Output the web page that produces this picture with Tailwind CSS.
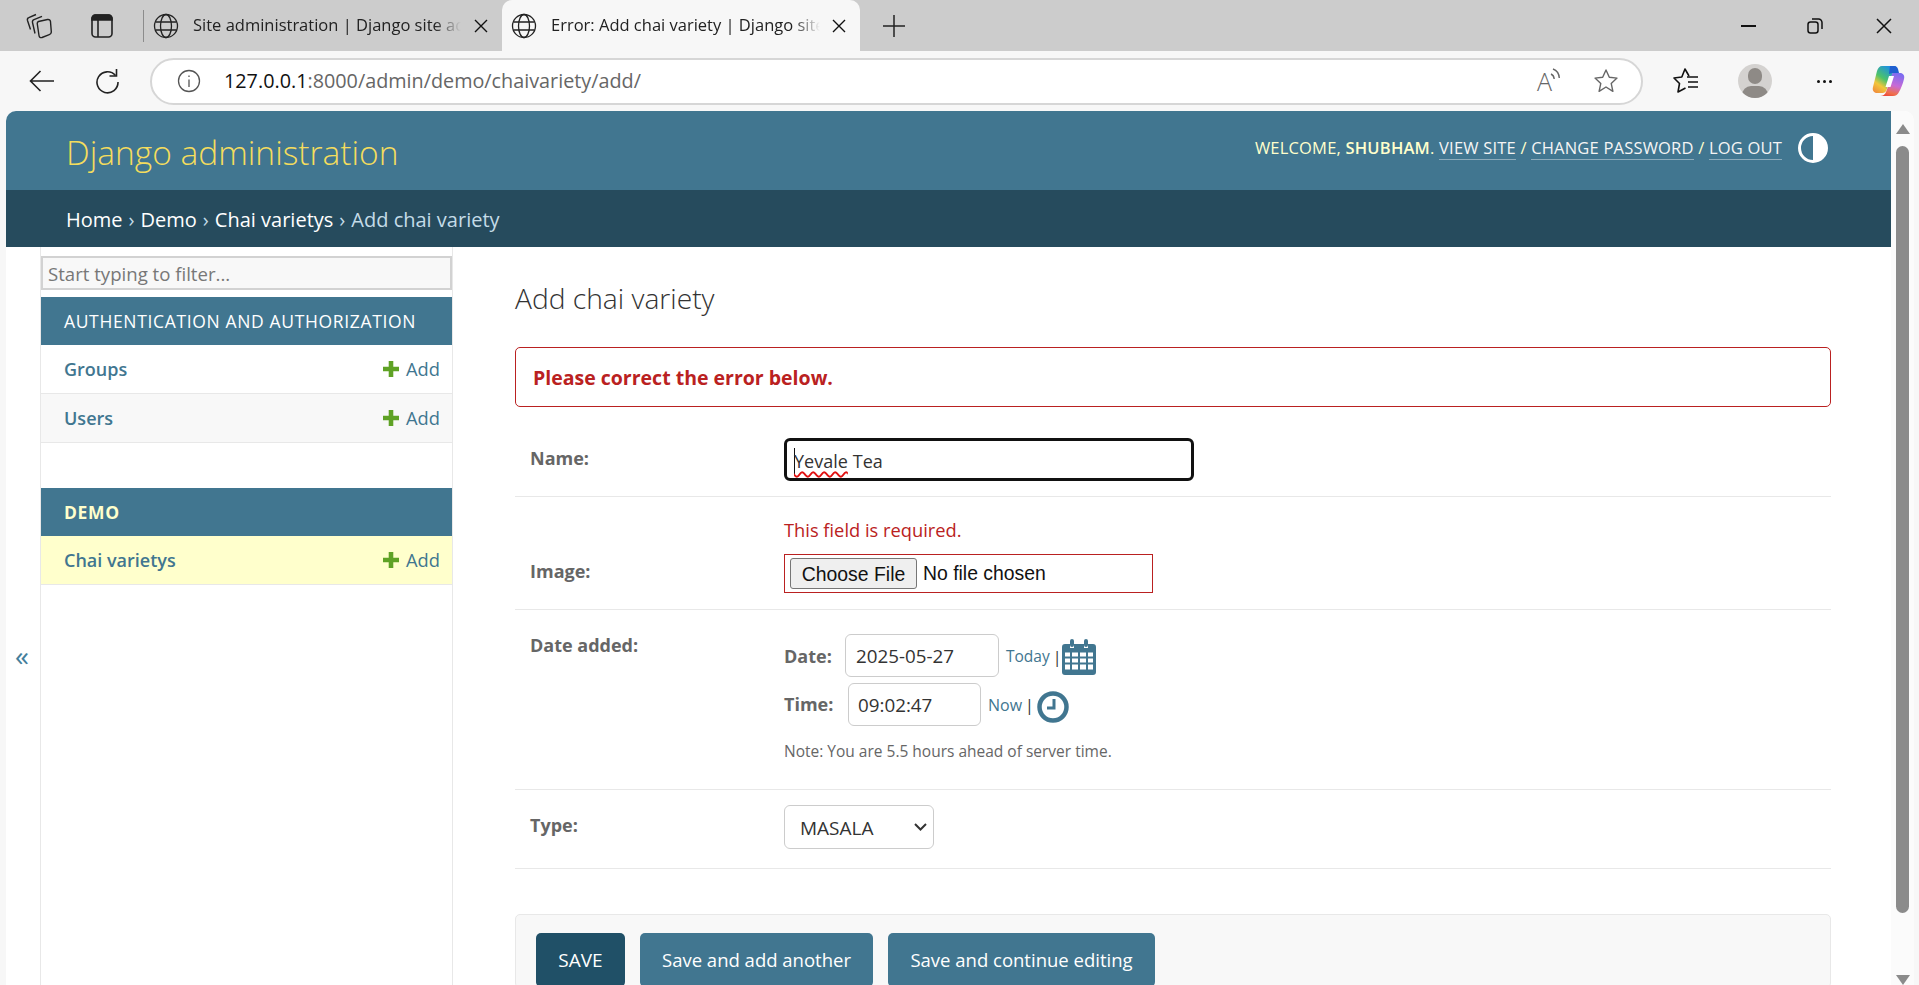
<!DOCTYPE html>
<html lang="en">
<head>
  <meta charset="UTF-8">
  <title>Error: Add chai variety | Django site admin</title>
  <script src="https://cdn.jsdelivr.net/npm/@tailwindcss/browser@4"></script>
</head>
<body class="h-[985px] overflow-hidden bg-[#f7f7f7] font-['Open_Sans',sans-serif] text-[#333]">

  <!-- Tab strip -->
  <div class="flex h-[51px] items-center bg-[#cccccc]">
    <div class="flex w-[143px] items-center pl-[26px]">
      <svg class="h-[26px] w-[26px]" viewBox="0 0 26 26" fill="none" stroke="#222" stroke-width="1.400"><path d="M12.500 8.500 21.500 6.500c1.700-.3 2.800.6 3 2.200l.8 10c.1 1.500-.6 2.500-2 2.900l-7.300 2.900c-1.600.5-2.800-.3-3-2l-1.700-11.500c-.2-1.300.3-2.200 1.200-2.500z"/><path d="M9 20.500 6.500 9.500c-.3-1.400.2-2.400 1.500-2.900l8-3.200"/><path d="M4.500 16.500 1.500 7.500c-.4-1.300.1-2.300 1.300-2.800L10 1.500"/></svg>
      <svg class="ml-[38px] h-[26px] w-[24px]" viewBox="0 0 24 26" fill="none" stroke="#222" stroke-width="1.600"><rect x="2" y="2" width="20" height="22" rx="3.500"/><path d="M2 7V5.500A3.500 3.500 0 0 1 5.500 2h13A3.500 3.500 0 0 1 22 5.500V7z" fill="#222"/><path d="M8 7v17"/></svg>
    </div>
    <div class="h-[32px] w-px bg-[#8c8c8c]"></div>
    <div class="flex w-[358px] items-center pl-[9px]">
      <svg class="h-[26px] w-[26px] shrink-0" viewBox="0 0 26 26" fill="none" stroke="#222" stroke-width="1.300"><circle cx="13" cy="13" r="11.500"/><ellipse cx="13" cy="13" rx="5.500" ry="11.500"/><path d="M2.500 9h21M2.500 17h21"/></svg>
      <span class="ml-[14px] w-[268px] overflow-hidden text-[16.500px] whitespace-nowrap text-[#222] [mask-image:linear-gradient(90deg,#000_90%,transparent)]">Site administration | Django site admin</span>
      <svg class="ml-[13px] h-[14px] w-[14px] shrink-0" viewBox="0 0 14 14" stroke="#111" stroke-width="1.400"><path d="m1 1 12 12M13 1 1 13"/></svg>
    </div>
    <div class="flex h-[51px] w-[358px] items-center rounded-t-[10px] bg-[#f7f7f7] pl-[9px]">
      <svg class="h-[26px] w-[26px] shrink-0" viewBox="0 0 26 26" fill="none" stroke="#222" stroke-width="1.300"><circle cx="13" cy="13" r="11.500"/><ellipse cx="13" cy="13" rx="5.500" ry="11.500"/><path d="M2.500 9h21M2.500 17h21"/></svg>
      <span class="ml-[14px] w-[269px] overflow-hidden text-[16.500px] whitespace-nowrap text-[#222] [mask-image:linear-gradient(90deg,#000_90%,transparent)]">Error: Add chai variety | Django site admin</span>
      <svg class="ml-[12px] h-[14px] w-[14px] shrink-0" viewBox="0 0 14 14" stroke="#111" stroke-width="1.400"><path d="m1 1 12 12M13 1 1 13"/></svg>
    </div>
    <svg class="ml-[23px] h-[22px] w-[22px]" viewBox="0 0 22 22" stroke="#222" stroke-width="1.500"><path d="M11 0v22M0 11h22"/></svg>
    <div class="ml-auto flex items-center">
      <svg class="mr-[51px] h-[2px] w-[15px]" viewBox="0 0 15 2"><rect width="15" height="2" fill="#111"/></svg>
      <svg class="mr-[53px] h-[16px] w-[16px]" viewBox="0 0 16 16" fill="none" stroke="#111" stroke-width="1.500"><rect x="1" y="4" width="10" height="11" rx="2.500"/><path d="M5 1h6.500A3.500 3.500 0 0 1 15 4.500V11"/></svg>
      <svg class="mr-[27px] h-[16px] w-[16px]" viewBox="0 0 16 16" stroke="#111" stroke-width="1.500"><path d="m1 1 14 14M15 1 1 15"/></svg>
    </div>
  </div>

  <!-- Address bar -->
  <div class="flex h-[60px] items-center bg-[#f7f7f7]">
    <svg class="ml-[29px] h-[24px] w-[26px]" viewBox="0 0 26 24" fill="none" stroke="#222" stroke-width="1.600"><path d="M25 12H2M11.500 2 1.500 12l10 10"/></svg>
    <svg class="ml-[40px] h-[26px] w-[25px]" viewBox="0 0 25 26" fill="none" stroke="#222" stroke-width="1.600"><path d="M20.500 7.500a10.500 10.500 0 1 0 2.500 6.500"/><path d="M21.500 1v7h-7"/></svg>
    <div class="ml-[30px] flex h-[47px] w-[1493px] items-center rounded-full border-2 border-[#d6d6d6] bg-white">
      <svg class="ml-[25px] h-[24px] w-[24px]" viewBox="0 0 24 24" fill="none" stroke="#555" stroke-width="1.300"><circle cx="12" cy="12" r="10.500"/><path d="M12 10.500V18M12 6.500v1.500"/></svg>
      <span class="ml-[23px] text-[19.800px] leading-none text-[#111]">127.0.0.1<span class="text-[#666]">:8000/admin/demo/chaivariety/add/</span></span>
      <div class="ml-auto flex items-center">
        <span class="text-[25px] leading-none font-light text-[#666]">A</span>
        <svg class="mb-[12px] -ml-[2px] h-[20px] w-[12px]" viewBox="0 0 12 20" fill="none" stroke="#666" stroke-width="1.400"><path d="M1 9c1.800.8 3 2.500 3.200 5M3 4c3.500 1.300 6 4.500 6.300 9"/></svg>
        <svg class="mr-[22px] ml-[31px] h-[26px] w-[26px]" viewBox="0 0 26 26" fill="none" stroke="#666" stroke-width="1.400" stroke-linejoin="round"><path d="m13 2 3.300 7.300 7.700.8-5.800 5.300 1.700 7.900L13 19l-6.900 4.300 1.700-7.900L2 10.100l7.700-.8z"/></svg>
      </div>
    </div>
    <svg class="ml-[30px] h-[28px] w-[26px]" viewBox="0 0 26 28" fill="none" stroke="#111" stroke-width="1.600" stroke-linejoin="round"><path d="M16 9 12 2 8.800 10 1 11l5.500 5.500L5 25l7.500-4"/><path d="M14 10h11M15 15h10M15 20h10"/></svg>
    <div class="relative ml-[39px] flex h-[34px] w-[34px] items-center justify-center overflow-hidden rounded-full bg-[#d4d2d0]">
      <div class="absolute top-[4px] h-[16px] w-[14px] rounded-full bg-[#8e8a86]"></div>
      <div class="absolute top-[22px] h-[18px] w-[26px] rounded-full bg-[#8e8a86]"></div>
    </div>
    <div class="ml-[45px] flex gap-[3px]">
      <div class="h-[3px] w-[3px] rounded-full bg-[#111]"></div>
      <div class="h-[3px] w-[3px] rounded-full bg-[#111]"></div>
      <div class="h-[3px] w-[3px] rounded-full bg-[#111]"></div>
    </div>
    <svg class="ml-[40px] h-[32px] w-[33px]" viewBox="0 0 33 32">
      <defs>
        <linearGradient id="cpA" x1="0.1" y1="1" x2="0.7" y2="0"><stop offset="0" stop-color="#f08a3c"/><stop offset=".3" stop-color="#f2c63a"/><stop offset=".55" stop-color="#4cc36a"/><stop offset="1" stop-color="#1b8fe6"/></linearGradient>
        <linearGradient id="cpB" x1="0.6" y1="0" x2="0.3" y2="1"><stop offset="0" stop-color="#7d6cf0"/><stop offset=".5" stop-color="#c86ad6"/><stop offset=".85" stop-color="#f0704a"/><stop offset="1" stop-color="#ec4a3c"/></linearGradient>
      </defs>
      <path d="M10 1h14l-3 7c-1.500 3.500-3 6.500-4 10l-2.500 7c-.7 2-2 3-4 3H5c-3 0-5-2.500-4-6l4-16c1-3 2.500-5 5-5z" fill="url(#cpA)"/>
      <path d="M18 1h4c2 0 3.500 1 4 3l1 4h-7l-3 1z" fill="#1f5fd0"/>
      <path d="M21 8h7c3 0 5 2.500 4 6-1.200 5-3 9.500-5 13-1.300 2.500-3 4-6 4H8c3 0 5-1.500 6-4l1.500-4c1-3 2.500-6 3.500-10 .5-2 1-5 2-5z" fill="url(#cpB)"/>
      <path d="M17 11h5l-3.500 11h-5z" fill="#fff"/>
    </svg>
  </div>

  <!-- Page -->
  <div class="ml-[6px] flex h-[874px] w-[1908px] overflow-hidden rounded-t-[10px] bg-white">
    <div class="w-[1885px] shrink-0">
      <header class="flex h-[79px] items-center justify-between bg-[#417690] pr-[63px] pl-[60px]">
        <h1 class="mt-[4px] text-[33.500px] font-light text-[#f5dd5d]">Django administration</h1>
        <div class="mb-[5px] flex items-center">
          <div class="text-[16.500px] tracking-[0.2px] text-[#ffffcc] uppercase">
            Welcome, <strong class="font-semibold">shubham</strong>.
            <a class="border-b border-white/40 text-[#f5f5f5]">View site</a> /
            <a class="border-b border-white/40 text-[#f5f5f5]">Change password</a> /
            <a class="border-b border-white/40 text-[#f5f5f5]">Log out</a>
          </div>
          <svg class="ml-[16px] h-[30px] w-[30px]" viewBox="0 0 30 30"><circle cx="15" cy="15" r="13.500" fill="none" stroke="#fff" stroke-width="3"/><path d="M15 1.500a13.500 13.500 0 0 1 0 27z" fill="#fff"/></svg>
        </div>
      </header>
      <div class="flex h-[57px] items-center bg-[#264b5d] pt-[2px] pl-[60px] text-[20px] text-[#c4dce8]">
        <a class="text-white">Home</a><span class="mx-[6px]">›</span><a class="text-white">Demo</a><span class="mx-[6px]">›</span><a class="text-white">Chai varietys</a><span class="mx-[6px]">›</span>Add chai variety
      </div>

      <div class="flex h-[738px]">
        <!-- Sidebar toggle -->
        <div class="w-[34px] shrink-0 pt-[394px] pl-[9px] text-[28px] leading-none text-[#447e9b]">«</div>

        <!-- Sidebar -->
        <nav class="w-[413px] shrink-0 border-x border-[#e8e8e8] pt-[9px]">
          <div class="flex h-[34px] items-center border-2 border-[#d2d2d2] bg-[#f8f8f8] px-[5px] pt-[2px] text-[18.600px] text-[#777]">Start typing to filter...</div>
          <div class="mt-[7px] flex h-[48px] items-center bg-[#417690] pl-[23px] text-[17.500px] tracking-[0.65px] text-white uppercase">Authentication and authorization</div>
          <div class="flex h-[49px] items-center justify-between border-b border-[#e8e8e8] pr-[12px] pl-[23px] text-[18px] text-[#417690]">
            <a class="font-semibold">Groups</a>
            <a class="flex items-center text-[18.300px]"><svg class="mr-[7px] h-[16px] w-[16px]" viewBox="1 1 14 14"><path d="M6 1h4v5h5v4h-5v5H6v-5H1V6h5z" fill="#5fa225"/></svg>Add</a>
          </div>
          <div class="flex h-[49px] items-center justify-between border-b border-[#e8e8e8] bg-[#f8f8f8] pr-[12px] pl-[23px] text-[18px] text-[#417690]">
            <a class="font-semibold">Users</a>
            <a class="flex items-center text-[18.300px]"><svg class="mr-[7px] h-[16px] w-[16px]" viewBox="1 1 14 14"><path d="M6 1h4v5h5v4h-5v5H6v-5H1V6h5z" fill="#5fa225"/></svg>Add</a>
          </div>
          <div class="mt-[45px] flex h-[48px] items-center bg-[#417690] pl-[23px] text-[17.500px] font-bold tracking-[0.65px] text-[#ffffcc] uppercase">Demo</div>
          <div class="flex h-[49px] items-center justify-between border-b border-[#e8e8e8] bg-[#ffffcc] pr-[12px] pl-[23px] text-[18px] text-[#417690]">
            <a class="font-semibold">Chai varietys</a>
            <a class="flex items-center text-[18.300px]"><svg class="mr-[7px] h-[16px] w-[16px]" viewBox="1 1 14 14"><path d="M6 1h4v5h5v4h-5v5H6v-5H1V6h5z" fill="#5fa225"/></svg>Add</a>
          </div>
        </nav>

        <!-- Content -->
        <main class="w-[1378px] pt-[33px] pl-[62px] text-[18px]">
          <h2 class="h-[36px] text-[28.200px] leading-[36px] font-light text-[#333]">Add chai variety</h2>
          <p class="mt-[31px] flex h-[60px] items-center rounded-[5px] border border-[#ba2121] pt-[1px] pl-[17px] text-[19.500px] font-bold text-[#ba2121]">Please correct the error below.</p>

          <div class="flex border-b border-[#e8e8e8] pt-[31px] pb-[15px]">
            <label class="w-[269px] shrink-0 pt-[7px] pl-[15px] font-bold text-[#666]">Name:</label>
            <div class="flex h-[43px] w-[410px] items-center rounded-[6px] border-[3px] border-[#111] bg-white pt-[4px] pl-[7px] text-[#333]">
              <span class="-mr-px h-[27px] w-px bg-[#111]"></span>
              <span class="underline decoration-[#e01010] decoration-wavy decoration-[1.500px] underline-offset-[3px]">Yevale</span><span class="ml-[5px]">Tea</span>
            </div>
          </div>

          <div class="flex border-b border-[#e8e8e8] pt-[21px] pb-[16px]">
            <label class="mb-[10px] w-[269px] shrink-0 self-end pl-[15px] leading-[24px] font-bold text-[#666]">Image:</label>
            <div>
              <p class="text-[18.300px] leading-[24px] text-[#ba2121]">This field is required.</p>
              <div class="mt-[12px] flex h-[39px] w-[369px] items-center border border-[#ba2121] pl-[5px] font-['Liberation_Sans',sans-serif] text-[19.400px] text-[#111]">
                <button class="h-[31px] w-[127px] rounded-[3px] border border-[#767676] bg-[#efefef] pt-[1px]">Choose File</button>
                <span class="ml-[6px] pt-[1px]">No file chosen</span>
              </div>
            </div>
          </div>

          <div class="flex border-b border-[#e8e8e8] pt-[24px] pb-[28px]">
            <label class="-mt-px w-[269px] shrink-0 pl-[15px] leading-[24px] font-bold text-[#666]">Date added:</label>
            <div>
              <div class="flex items-center">
                <label class="w-[61px] pt-[1px] font-bold text-[#666]">Date:</label>
                <input class="h-[43px] w-[154px] rounded-[6px] border border-[#cccccc] bg-white pt-[1px] pl-[10px] text-[18.800px] text-[#333]" value="2025-05-27">
                <a class="ml-[7px] pt-[3px] text-[15.500px] text-[#417690]">Today</a><span class="mx-[3px] pt-[3px] text-[16px]">|</span>
                <svg class="mt-[3px] -ml-[3px] h-[36px] w-[34px]" viewBox="0 0 34 36">
                  <path d="M3 5h5v4h4V5h10v4h4V5h5a3 3 0 0 1 3 3v25a3 3 0 0 1-3 3H3a3 3 0 0 1-3-3V8a3 3 0 0 1 3-3z" fill="#417690"/>
                  <rect x="8" y="0" width="4" height="8" rx="2" fill="#417690"/><rect x="22" y="0" width="4" height="8" rx="2" fill="#417690"/>
                  <path d="M3 13.500h5v4H3zm7 0h6v4h-6zm8 0h6v4h-6zm8 0h5v4h-5zM3 19.500h5v4H3zm7 0h6v4h-6zm8 0h6v4h-6zm8 0h5v4h-5zM3 25.500h5v5H3zm7 0h6v5h-6zm8 0h6v5h-6zm8 0h5v5h-5z" fill="#fff"/>
                </svg>
              </div>
              <div class="mt-[6px] flex items-center">
                <label class="w-[64px] font-bold text-[#666]">Time:</label>
                <input class="h-[43px] w-[133px] rounded-[6px] border border-[#cccccc] bg-white pt-[1px] pl-[9px] text-[18.800px] text-[#333]" value="09:02:47">
                <a class="ml-[7px] pt-[1px] text-[16px] text-[#417690]">Now</a><span class="mx-[3px] pt-[1px] text-[16px]">|</span>
                <svg class="mt-[5px] h-[32px] w-[32px]" viewBox="0 0 32 32" fill="none" stroke="#417690"><circle cx="16" cy="16" r="13.500" stroke-width="4.500"/><path d="M17 8v9h-7" stroke-width="3"/></svg>
              </div>
              <p class="mt-[15px] text-[15.500px] leading-[20px] text-[#666]">Note: You are 5.5 hours ahead of server time.</p>
            </div>
          </div>

          <div class="flex border-b border-[#e8e8e8] pt-[15px] pb-[19px]">
            <label class="w-[269px] shrink-0 pt-[8px] pl-[15px] leading-[24px] font-bold text-[#666]">Type:</label>
            <div class="relative">
              <select class="h-[44px] w-[150px] appearance-none rounded-[6px] border border-[#cccccc] bg-white pt-[3px] pl-[15px] text-[19px] text-[#333]"><option>MASALA</option></select>
              <svg class="absolute top-[18px] left-[130px] h-[8px] w-[13px]" viewBox="0 0 13 8" fill="none" stroke="#333" stroke-width="2"><path d="m1 1 5.500 5.500L12 1"/></svg>
            </div>
          </div>

          <div class="mt-[45px] flex gap-[15px] rounded-[5px] border border-[#e8e8e8] bg-[#f8f8f8] pt-[18px] pl-[20px]">
            <button class="h-[54px] w-[89px] rounded-[5px] bg-[#205067] text-[19px] text-white uppercase">Save</button>
            <button class="h-[54px] w-[233px] rounded-[5px] bg-[#417690] text-[18.500px] text-white">Save and add another</button>
            <button class="h-[54px] w-[267px] rounded-[5px] bg-[#417690] text-[18.500px] text-white">Save and continue editing</button>
          </div>
        </main>
      </div>
    </div>

    <!-- Scrollbar -->
    <div class="flex w-[23px] shrink-0 flex-col items-center bg-[#fbfbfb] pt-[13px]">
      <div class="h-0 w-0 border-x-[7px] border-b-[10px] border-x-transparent border-b-[#8b8b8b]"></div>
      <div class="mt-[12px] h-[767px] w-[13px] rounded-full bg-[#8b8b8b]"></div>
      <div class="mt-[62px] h-0 w-0 border-x-[7px] border-t-[10px] border-x-transparent border-t-[#8b8b8b]"></div>
    </div>
  </div>
</body>
</html>
